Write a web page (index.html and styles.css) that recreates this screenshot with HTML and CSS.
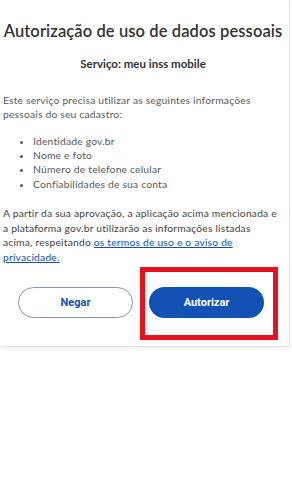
FILE: index.html
```html
<!DOCTYPE html>
<html lang="pt-BR">
<head>
<meta charset="utf-8">
<link rel="stylesheet" href="styles.css">
</head>
<body>
<div class="card">
  <h1 class="title">Autorização de uso de dados pessoais</h1>
  <h2 class="service">Serviço: meu inss mobile</h2>
  <p class="intro">Este serviço precisa utilizar as seguintes informações pessoais do seu cadastro:</p>
  <ul class="items">
    <li>Identidade gov.br</li>
    <li>Nome e foto</li>
    <li>Número de telefone celular</li>
    <li>Confiabilidades de sua conta</li>
  </ul>
  <p class="terms">A partir da sua aprovação, a aplicação acima mencionada e a plataforma gov.br utilizarão as informações listadas acima, respeitando <a href="#">os termos de uso e o aviso de privacidade.</a></p>
  <div class="actions">
    <button class="btn btn-outline">Negar</button>
    <button class="btn btn-primary">Autorizar</button>
    <div class="highlight"></div>
  </div>
</div>
</body>
</html>
```
FILE: styles.css
```css
* { box-sizing: border-box; }
html, body { margin: 0; padding: 0; background: #fff; }
body { font-family: Lato, "Open Sans", sans-serif; width: 292px; height: 500px; overflow: hidden; }
.card {
  width: 290px;
  height: 347px;
  padding: 20px 6px 0 3px;
  border-right: 1px solid #e4e4e4;
  border-bottom: 1px solid #e4e4e4;
  box-shadow: 0 2px 3px rgba(0,0,0,0.06);
  background: #fff;
}
.title {
  margin: 0;
  font-size: 16.5px;
  font-weight: 600;
  color: #333;
  text-align: center;
  line-height: 22px;
  letter-spacing: 0.1px;
}
.service {
  margin: 14px 0 0;
  font-size: 11.5px;
  font-weight: 700;
  color: #333;
  text-align: center;
  line-height: 16px;
}
.intro {
  margin: 21px 0 0;
  font-size: 10.3px;
  line-height: 14px;
  letter-spacing: 0.2px;
  color: #5a5a5a;
}
.items {
  margin: 13px 0 0;
  padding-left: 30px;
  font-size: 10.3px;
  line-height: 14.2px;
  letter-spacing: 0.2px;
  color: #5a5a5a;
}
.terms {
  margin: 15px 0 0;
  font-size: 10.3px;
  line-height: 14.8px;
  letter-spacing: 0.2px;
  color: #444;
}
.terms a { color: #1351b4; text-decoration: underline; }
.actions {
  position: relative;
  display: flex;
  gap: 16px;
  margin-top: 22px;
  padding-left: 15px;
}
.btn {
  width: 115px;
  height: 31px;
  border-radius: 16px;
  font-family: Roboto, "Liberation Sans", sans-serif;
  font-weight: 700;
  font-size: 11px;
  cursor: pointer;
}
.btn-outline {
  background: #fff;
  color: #1351b4;
  border: 1.5px solid #8a97a6;
}
.btn-primary {
  background: #1351b4;
  color: #fff;
  border: none;
}
.highlight {
  position: absolute;
  left: 137px;
  top: -20px;
  width: 138px;
  height: 73px;
  border: 5px solid #e8121e;
}
```
